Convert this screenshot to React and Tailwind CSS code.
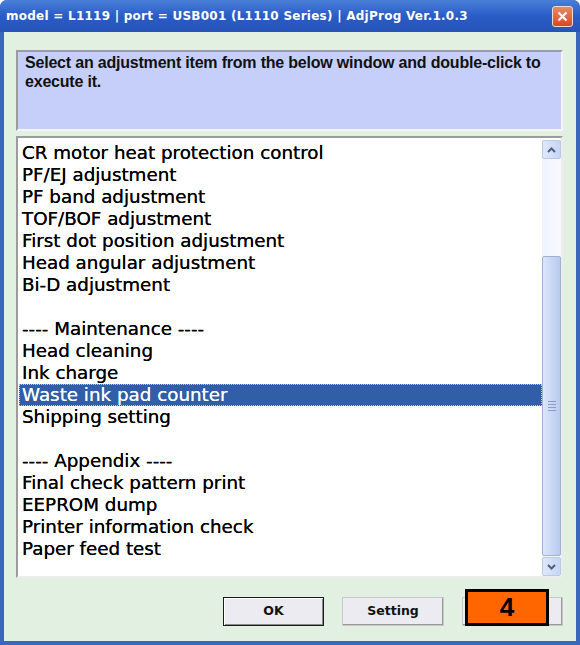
const items = [
  "CR motor heat protection control",
  "PF/EJ adjustment",
  "PF band adjustment",
  "TOF/BOF adjustment",
  "First dot position adjustment",
  "Head angular adjustment",
  "Bi-D adjustment",
  "",
  "---- Maintenance ----",
  "Head cleaning",
  "Ink charge",
  "Waste ink pad counter",
  "Shipping setting",
  "",
  "---- Appendix ----",
  "Final check pattern print",
  "EEPROM dump",
  "Printer information check",
  "Paper feed test",
];

const selected = "Waste ink pad counter";

const Chevron = ({ up }) => (
  <svg width="9" height="6" viewBox="0 0 9 6">
    <path
      d={up ? "M1 5 L4.5 1.5 L8 5" : "M1 1 L4.5 4.5 L8 1"}
      fill="none"
      stroke="#4d6185"
      strokeWidth="2"
    />
  </svg>
);

const App = () => {
  return (
    <div className="w-[580px] h-[645px] bg-white">
      <div className="w-[580px] h-[645px] flex flex-col rounded-t-[7px] overflow-hidden bg-[#3a66bb]">

        {/* Title bar */}
        <div className="h-[32px] shrink-0 flex items-center justify-between pl-[6px] pr-[7px] bg-gradient-to-b from-[#4a7fd9] via-[#2a5cc6] to-[#2654b8]">
          <span
            className="text-white font-bold text-[12px] tracking-[0.25px] whitespace-nowrap"
            style={{ fontFamily: "'DejaVu Sans', Verdana, sans-serif" }}
          >
            model = L1119 | port = USB001 (L1110 Series) | AdjProg Ver.1.0.3
          </span>
          <div className="w-[21px] h-[21px] rounded-[3px] border border-[#f3d8cc] bg-gradient-to-b from-[#e88a66] to-[#cf4a1f] flex items-center justify-center">
            <svg width="11" height="11" viewBox="0 0 11 11">
              <path d="M1.5 1.5 L9.5 9.5 M9.5 1.5 L1.5 9.5" stroke="white" strokeWidth="2.2" />
            </svg>
          </div>
        </div>

        {/* Client area */}
        <div className="flex-1 mx-[4px] mb-[4px] bg-[#e2f0e2] flex flex-col pt-[18px] pl-[12px] pr-[13px]">

          {/* Info box */}
          <div className="h-[81px] bg-[#c6cffa] border-t-2 border-l-2 border-t-[#9c9c9c] border-l-[#9c9c9c] border-b-2 border-r-2 border-b-[#f4f4f4] border-r-[#f4f4f4] px-[7px] pt-[1px]">
            <p
              className="text-[16px] font-bold leading-[19px] text-[#111] tracking-[-0.2px]"
              style={{ fontFamily: "'Liberation Sans', Arial, sans-serif" }}
            >
              Select an adjustment item from the below window and double-click to execute it.
            </p>
          </div>

          {/* List box */}
          <div className="mt-[5px] h-[442px] bg-white border-t-2 border-l-2 border-t-[#9c9c9c] border-l-[#9c9c9c] border-b-2 border-r-2 border-b-[#ececec] border-r-[#ececec] flex">
            <div className="flex-1 pt-[4px] pl-[1px]">
              {items.map((item, i) => {
                const isSel = item === selected;
                return (
                  <div
                    key={i}
                    className={`h-[22px] pl-[3px] flex items-center whitespace-nowrap text-[18.3px] [text-shadow:0_0_0.5px_currentColor] ${
                      isSel
                        ? "bg-[#305fa8] text-white outline outline-1 outline-dotted outline-[#c8c8c8] -outline-offset-1"
                        : "text-black"
                    }`}
                    style={{ fontFamily: "'DejaVu Sans', Verdana, sans-serif" }}
                  >
                    {item}
                  </div>
                );
              })}
            </div>

            {/* Scrollbar */}
            <div className="w-[19px] mt-[2px] flex flex-col bg-[#f3f6fd]">
              <div className="h-[19px] rounded-[2px] border border-[#bac9e6] bg-gradient-to-r from-[#dfe8fb] to-[#c7d5f4] flex items-center justify-center">
                <Chevron up />
              </div>
              <div className="h-[97px] bg-gradient-to-r from-[#eef3fd] to-[#f8faff]" />
              <div className="flex-1 rounded-[2px] border border-[#9fb2d6] bg-gradient-to-r from-[#dce6fa] via-[#c9d8f5] to-[#b9cbee] flex items-center justify-center">
                <div className="flex flex-col gap-[2px]">
                  <div className="w-[8px] h-[1px] bg-[#8b9dc3]" />
                  <div className="w-[8px] h-[1px] bg-[#8b9dc3]" />
                  <div className="w-[8px] h-[1px] bg-[#8b9dc3]" />
                  <div className="w-[8px] h-[1px] bg-[#8b9dc3]" />
                </div>
              </div>
              <div className="h-[19px] mt-[1px] rounded-[2px] border border-[#bac9e6] bg-gradient-to-r from-[#dfe8fb] to-[#c7d5f4] flex items-center justify-center">
                <Chevron />
              </div>
            </div>
          </div>

          {/* Buttons */}
          <div
            className="mt-[19px] flex justify-end gap-[18px] text-[12.5px] font-bold text-[#111]"
            style={{ fontFamily: "'DejaVu Sans', Verdana, sans-serif" }}
          >
            <button className="w-[101px] h-[29px] bg-[#ecebf1] border border-[#1a1a1a] shadow-[inset_1px_1px_0_#fff,inset_-1px_-1px_0_#8a8a8a]">
              OK
            </button>
            <button className="w-[102px] h-[29px] bg-[#ecebf1] border border-[#c8c8c8] shadow-[inset_-1px_-1px_0_#9a9a9a]">
              Setting
            </button>
            <div className="relative">
              <button className="w-[101px] h-[29px] bg-[#ecebf1] border border-[#c8c8c8] shadow-[inset_-1px_-1px_0_#9a9a9a]" />
              <div
                className="absolute left-[3px] top-[-8px] w-[84px] h-[37px] bg-[#ff6600] border-[3px] border-black flex items-center justify-center text-[26px] font-bold text-black"
                style={{ fontFamily: "'Liberation Sans', Arial, sans-serif" }}
              >
                4
              </div>
            </div>
          </div>

        </div>
      </div>
    </div>
  );
};

export default App;
